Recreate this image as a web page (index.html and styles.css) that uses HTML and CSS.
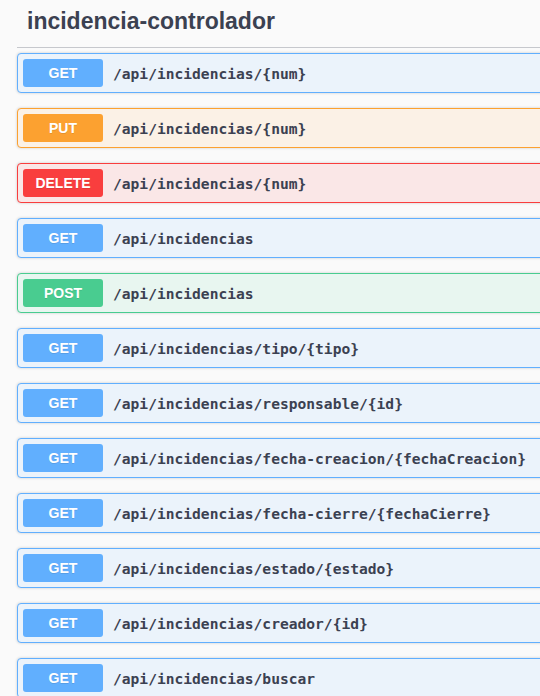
FILE: index.html
```html
<!DOCTYPE html>
<html lang="es">
<head>
<meta charset="utf-8">
<title>incidencia-controlador</title>
<link rel="stylesheet" href="styles.css">
</head>
<body>
<div class="section">
  <h3 class="tag">incidencia-controlador</h3>
  <div class="ops">
    <div class="op get"><span class="method">GET</span><span class="path">/api/incidencias/{num}</span></div>
    <div class="op put"><span class="method">PUT</span><span class="path">/api/incidencias/{num}</span></div>
    <div class="op delete"><span class="method">DELETE</span><span class="path">/api/incidencias/{num}</span></div>
    <div class="op get"><span class="method">GET</span><span class="path">/api/incidencias</span></div>
    <div class="op post"><span class="method">POST</span><span class="path">/api/incidencias</span></div>
    <div class="op get"><span class="method">GET</span><span class="path">/api/incidencias/tipo/{tipo}</span></div>
    <div class="op get"><span class="method">GET</span><span class="path">/api/incidencias/responsable/{id}</span></div>
    <div class="op get"><span class="method">GET</span><span class="path">/api/incidencias/fecha-creacion/{fechaCreacion}</span></div>
    <div class="op get"><span class="method">GET</span><span class="path">/api/incidencias/fecha-cierre/{fechaCierre}</span></div>
    <div class="op get"><span class="method">GET</span><span class="path">/api/incidencias/estado/{estado}</span></div>
    <div class="op get"><span class="method">GET</span><span class="path">/api/incidencias/creador/{id}</span></div>
    <div class="op get"><span class="method">GET</span><span class="path">/api/incidencias/buscar</span></div>
  </div>
</div>
</body>
</html>
```
FILE: styles.css
```css
html, body {
  margin: 0;
  padding: 0;
  background: #fafafa;
  overflow: hidden;
}
body {
  font-family: "Liberation Sans", Arial, sans-serif;
  color: #3b4151;
}
.section {
  width: 580px;
  padding-left: 17px;
}
.tag {
  margin: 0;
  height: 48px;
  box-sizing: border-box;
  padding: 8px 0 0 10px;
  font-size: 23px;
  line-height: 26px;
  font-weight: 700;
  color: #3b4151;
  border-bottom: 1px solid #c6c8cd;
}
.ops {
  display: flex;
  flex-direction: column;
  gap: 15px;
  padding-top: 5px;
}
.op {
  display: flex;
  align-items: center;
  gap: 10px;
  height: 40px;
  box-sizing: border-box;
  padding: 5px;
  border: 1px solid;
  border-radius: 4px;
  box-shadow: 0 0 3px rgba(0, 0, 0, 0.19);
}
.method {
  width: 80px;
  height: 28px;
  border-radius: 3px;
  display: flex;
  align-items: center;
  justify-content: center;
  color: #fff;
  font-weight: 700;
  font-size: 14px;
  text-shadow: 0 1px 0 rgba(0, 0, 0, 0.1);
  flex: none;
}
.path {
  font-family: "DejaVu Sans Mono", "Liberation Mono", monospace;
  font-weight: 700;
  font-size: 14.6px;
  color: #3b4151;
  white-space: nowrap;
}
.get { background: #ebf3fb; border-color: #61affe; }
.get .method { background: #61affe; }
.put { background: #fbf1e6; border-color: #fca130; }
.put .method { background: #fca130; }
.delete { background: #fae7e7; border-color: #f93e3e; }
.delete .method { background: #f93e3e; }
.post { background: #e8f6f0; border-color: #49cc90; }
.post .method { background: #49cc90; }
```
